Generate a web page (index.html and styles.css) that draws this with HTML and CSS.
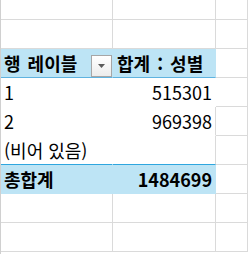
FILE: index.html
```html
<!DOCTYPE html>
<html lang="ko">
<head>
<meta charset="utf-8">
<link rel="stylesheet" href="styles.css">
</head>
<body>
<div class="sheet">
  <div class="row first">
    <div class="cell"></div><div class="cell"></div><div class="cell"></div>
  </div>
  <div class="row">
    <div class="cell"></div><div class="cell"></div><div class="cell"></div>
  </div>
  <div class="row">
    <div class="cell pv head label">
      <span class="txt">행 레이블</span>
      <span class="dd"><svg width="7" height="4" viewBox="0 0 7 4"><path d="M0 0H7L3.5 4Z" fill="#5a5a5a"/></svg></span>
    </div>
    <div class="cell pv head hb">합계 : 성별</div>
    <div class="cell"></div>
  </div>
  <div class="row">
    <div class="cell pv data">1</div>
    <div class="cell pv data num nr">515301</div>
    <div class="cell"></div>
  </div>
  <div class="row">
    <div class="cell pv data">2</div>
    <div class="cell pv data num">969398</div>
    <div class="cell"></div>
  </div>
  <div class="row">
    <div class="cell pv data last">(비어 있음)</div>
    <div class="cell pv data num last"></div>
    <div class="cell"></div>
  </div>
  <div class="row">
    <div class="cell pv total">총합계</div>
    <div class="cell pv total num">1484699</div>
    <div class="cell"></div>
  </div>
  <div class="row">
    <div class="cell"></div><div class="cell"></div><div class="cell"></div>
  </div>
  <div class="row">
    <div class="cell"></div><div class="cell"></div><div class="cell"></div>
  </div>
</div>
</body>
</html>
```
FILE: styles.css
```css
html, body {
  margin: 0;
  padding: 0;
  background: #ffffff;
}
.sheet {
  width: 248px;
  height: 254px;
  overflow: hidden;
  border-left: 1px solid #d0d0d0;
  box-sizing: border-box;
  font-family: "Noto Sans CJK KR", "Noto Sans", sans-serif;
  font-size: 18px;
  color: #000;
}
.row {
  display: grid;
  grid-template-columns: 112px 103px 1fr;
  height: 29px;
}
.row.first {
  height: 20px;
}
.cell {
  box-sizing: border-box;
  border-right: 1px solid #dadada;
  border-bottom: 1px solid #dadada;
  display: flex;
  align-items: center;
  padding: 0 3px;
  line-height: 1;
  white-space: nowrap;
  overflow: visible;
}
.pv.head {
  background: #bde4f5;
  border-right-color: #bde4f5;
  border-bottom-color: #5fb3e0;
  font-weight: bold;
  word-spacing: 2px;
}
.pv.head.label {
  justify-content: space-between;
  align-items: stretch;
  padding-right: 0;
}
.pv.head.label .txt {
  align-self: center;
}
.pv.head.hb {
  padding-left: 4px;
}
.dd {
  align-self: flex-end;
  width: 21px;
  height: 22px;
  box-sizing: border-box;
  border: 1px solid #a6a6a6;
  background: linear-gradient(#ffffff, #ececec);
  display: flex;
  align-items: center;
  justify-content: center;
}
.pv.data {
  border-bottom-color: #ffffff;
  border-right-color: #ffffff;
}
.pv.data.num {
  border-right-color: #dadada;
}
.pv.data.num.nr {
  border-right-color: #ffffff;
}
.pv.data.last {
  border-bottom-color: #2ea6df;
}
.num {
  justify-content: flex-end;
}
.pv.total {
  background: #bde4f5;
  border-right-color: #bde4f5;
  border-bottom-color: #bde4f5;
  font-weight: bold;
}
```
